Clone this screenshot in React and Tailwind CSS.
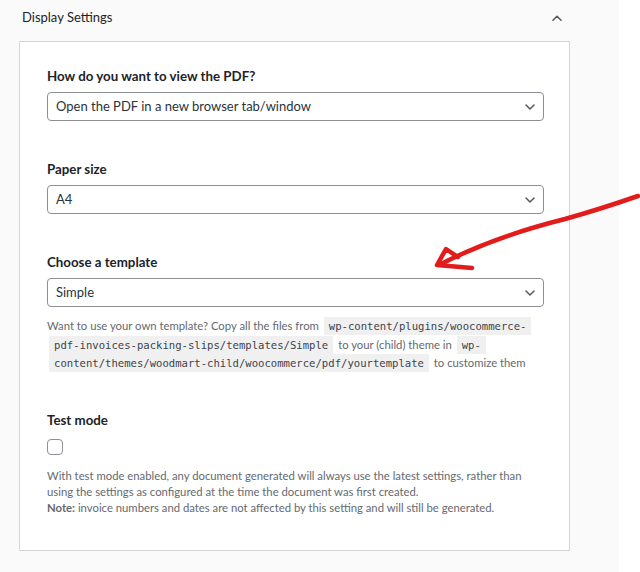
import React from 'react';

const Chevron = ({ up = false }) => (
  <svg width="10" height="6" viewBox="0 0 10 6" fill="none" className="shrink-0">
    <path
      d={up ? 'M1 5.2 L5 1.2 L9 5.2' : 'M1 1 L5 5 L9 1'}
      stroke="#50575e"
      strokeWidth="1.5"
      strokeLinecap="round"
      strokeLinejoin="round"
    />
  </svg>
);

const Code = ({ children }) => (
  <span className="bg-[#f0f0f1] px-[5px] py-[3px] mx-[2px] font-['DejaVu_Sans_Mono',monospace] text-[10.6px] leading-[18px] text-[#3c434a]">
    {children}
  </span>
);

function SelectField({ label, value, className = '' }) {
  return (
    <div className={className}>
      <div className="text-[13.3px] leading-[20px] font-bold text-[#1d2327]">{label}</div>
      <div className="mt-[6px] h-[29px] flex items-center justify-between border border-[#8c8f94] rounded-[4px] pl-[8px] pr-[8px] text-[13px] text-[#2c3338]">
        <span>{value}</span>
        <Chevron />
      </div>
    </div>
  );
}

export default function App() {
  return (
    <div className="relative w-[640px] h-[572px] bg-white overflow-hidden font-['Lato',sans-serif]">
      <div className="w-[619px] h-full bg-[#fafafa]">
        {/* Header */}
        <div className="h-[36px] mb-[5px] flex items-center justify-between pl-[22px] pr-[57px]">
          <h2 className="text-[13px] text-[#1d2327]">Display Settings</h2>
          <Chevron up />
        </div>

        {/* Card */}
        <div className="ml-[19px] w-[551px] border border-[#d6d6d6] bg-white pl-[27px] pr-[25px] pt-[24px] pb-[34px]">
          <SelectField label="How do you want to view the PDF?" value="Open the PDF in a new browser tab/window" />
          <SelectField className="mt-[38px]" label="Paper size" value="A4" />
          <SelectField className="mt-[38px]" label="Choose a template" value="Simple" />

          <p className="mt-[10px] text-[11.3px] leading-[18.5px] text-[#646970] whitespace-nowrap">
            Want to use your own template? Copy all the files from <Code>wp-content/plugins/woocommerce-</Code>
            <br />
            <Code>pdf-invoices-packing-slips/templates/Simple</Code> to your (child) theme in <Code>wp-</Code>
            <br />
            <Code>content/themes/woodmart-child/woocommerce/pdf/yourtemplate</Code> to customize them
          </p>

          <div className="mt-[37px] text-[13.3px] leading-[20px] font-bold text-[#1d2327]">Test mode</div>
          <div className="mt-[9px] w-[16px] h-[16px] border border-[#8c8f94] rounded-[4px] bg-white" />
          <p className="mt-[13px] text-[11.3px] leading-[16px] text-[#646970] whitespace-nowrap">
            With test mode enabled, any document generated will always use the latest settings, rather than
            <br />
            using the settings as configured at the time the document was first created.
            <br />
            <strong className="font-bold">Note:</strong> invoice numbers and dates are not affected by this setting and will still be generated.
          </p>
        </div>
      </div>

      {/* Hand-drawn annotation arrow */}
      <svg className="absolute inset-0 pointer-events-none" width="640" height="572" viewBox="0 0 640 572">
        <path
          d="M638 196 C615 204 590 212 565 219 C525 229 482 243 441 264"
          stroke="#e21b1b"
          strokeWidth="4.5"
          fill="none"
          strokeLinecap="round"
        />
        <path
          d="M458 257 L446 249 L437 265 L472 268"
          stroke="#e21b1b"
          strokeWidth="4.5"
          fill="none"
          strokeLinecap="round"
          strokeLinejoin="round"
        />
      </svg>
    </div>
  );
}
